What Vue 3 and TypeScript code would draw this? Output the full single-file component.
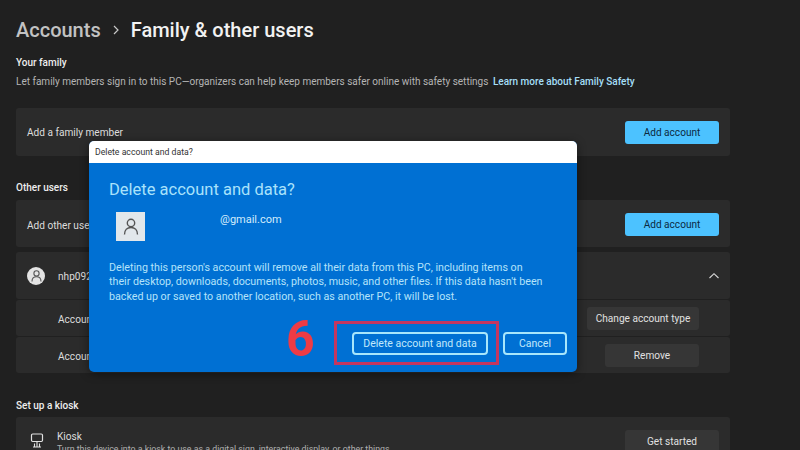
<script setup lang="ts">
const bodyText =
  "Deleting this person's account will remove all their data from this PC, including items on their desktop, downloads, documents, photos, music, and other files. If this data hasn't been backed up or saved to another location, such as another PC, it will be lost.";
</script>

<template>
  <div class="page">
    <header class="crumb">
      <span class="crumb-parent">Accounts</span>
      <svg class="crumb-sep" width="8" height="12" viewBox="0 0 8 12"><path d="M2 2l4 4-4 4" fill="none" stroke="#c8c8c8" stroke-width="1.2" /></svg>
      <span class="crumb-current">Family &amp; other users</span>
    </header>

    <h2 class="label first">Your family</h2>
    <p class="lead">
      Let family members sign in to this PC—organizers can help keep members safer online with safety settings
      <a class="link">Learn more about Family Safety</a>
    </p>

    <section class="card family">
      <span class="row-text low">Add a family member</span>
      <button class="btn primary">Add account</button>
    </section>

    <h2 class="label other">Other users</h2>
    <section class="card add-other">
      <span class="row-text">Add other user</span>
      <button class="btn primary">Add account</button>
    </section>

    <section class="group">
      <div class="card user-head">
        <span class="avatar">
          <svg width="11" height="12" viewBox="0 0 11 12"><circle cx="5.5" cy="3.4" r="2.6" fill="none" stroke="#555" stroke-width="1.1" /><path d="M1 11.5c0-3 2-4.7 4.5-4.7S10 8.500 10 11.500" fill="none" stroke="#555" stroke-width="1.1" /></svg>
        </span>
        <span class="row-text">nhp0923</span>
        <svg class="chevron" width="12" height="8" viewBox="0 0 12 8"><path d="M1.500 6L6 1.700 10.500 6" fill="none" stroke="#d8d8d8" stroke-width="1.100" /></svg>
      </div>
      <div class="card sub">
        <span class="row-text">Account</span>
        <button class="btn">Change account type</button>
      </div>
      <div class="card sub">
        <span class="row-text">Account</span>
        <button class="btn remove">Remove</button>
      </div>
    </section>

    <h2 class="label kiosk-label">Set up a kiosk</h2>
    <section class="card kiosk">
      <svg class="kiosk-icon" width="14" height="15" viewBox="0 0 14 15"><rect x="1.500" y="1" width="11" height="7.500" rx="1.200" fill="none" stroke="#e2e2e2" stroke-width="1.200" /><path d="M7 8.500V14M4.500 10.500v3.500M9.500 10.500v3.500M3 14h8" fill="none" stroke="#e2e2e2" stroke-width="1.100" /></svg>
      <div class="kiosk-text">
        <div class="row-text">Kiosk</div>
        <div class="kiosk-sub">Turn this device into a kiosk to use as a digital sign, interactive display, or other things</div>
      </div>
      <button class="btn">Get started</button>
    </section>

    <div class="dialog">
      <div class="titlebar">Delete account and data?</div>
      <div class="dialog-body">
        <h1 class="dialog-title">Delete account and data?</h1>
        <div class="identity">
          <span class="tile">
            <svg width="16" height="17" viewBox="0 0 16 17"><circle cx="8" cy="5" r="3.700" fill="none" stroke="#555" stroke-width="1.400" /><path d="M1.500 16.500c0-4.500 2.800-7 6.500-7s6.500 2.500 6.500 7" fill="none" stroke="#555" stroke-width="1.400" /></svg>
          </span>
          <span class="email">@gmail.com</span>
        </div>
        <p class="dialog-text">{{ bodyText }}</p>
        <div class="actions">
          <span class="step">6</span>
          <div class="highlight">
            <button class="outline">Delete account and data</button>
          </div>
          <button class="outline cancel">Cancel</button>
        </div>
      </div>
    </div>
  </div>
</template>

<style>
html, body { margin: 0; background: #1f1f1f; }
</style>

<style scoped>
.page {
  position: relative;
  width: 800px;
  height: 450px;
  overflow: hidden;
  box-sizing: border-box;
  padding: 0 70px 0 16px;
  background: #202020;
  font-family: Roboto, "Open Sans", sans-serif;
  color: #e4e4e4;
}
.crumb {
  display: flex;
  align-items: center;
  height: 30px;
  margin-top: 15px;
  font-size: 20px;
  font-weight: 500;
  line-height: 30px;
}
.crumb-parent { color: #c2c2c2; }
.crumb-sep { margin: 0 11px 0 11px; }
.crumb-current { color: #f2f2f2; }
.label {
  margin: 0;
  font-size: 10px;
  line-height: 14px;
  font-weight: 500;
  color: #eeeeee;
}
.label.first { margin-top: 11px; }
.label.other { margin-top: 25px; }
.label.kiosk-label { margin-top: 26px; }
.lead {
  margin: 5px 0 0;
  font-size: 10px;
  line-height: 14px;
  color: #b5b5b5;
  white-space: nowrap;
}
.link { margin-left: 2px; color: #a5dff7; font-weight: 500; }
.card {
  display: flex;
  align-items: center;
  justify-content: space-between;
  box-sizing: border-box;
  padding: 0 11px 0 11px;
  background: #2b2b2b;
  border-radius: 3px;
}
.family { height: 48px; margin-top: 19px; }
.add-other { height: 47px; margin-top: 5px; padding-top: 2px; }
.row-text { font-size: 10.100px; line-height: 14px; color: #dddddd; white-space: nowrap; }
.low { padding-top: 2px; }
.add-other .row-text { padding-top: 2px; }
.group { display: flex; flex-direction: column; gap: 1px; margin-top: 5px; }
.user-head { height: 47px; justify-content: flex-start; gap: 13px; }
.user-head .row-text { padding-top: 3px; }
.chevron { margin-left: auto; margin-right: -1px; }
.avatar {
  display: flex;
  align-items: center;
  justify-content: center;
  width: 18px;
  height: 18px;
  border-radius: 50%;
  background: #e3e3e3;
}
.sub { height: 36px; padding: 0 31px 0 42px; }
.sub .row-text { padding-top: 3px; }
.btn {
  box-sizing: border-box;
  width: 94px;
  height: 23px;
  padding: 0;
  border: 0;
  border-radius: 3px;
  background: #363636;
  color: #e0e0e0;
  font: 400 10.100px Roboto, "Open Sans", sans-serif;
}
.sub .btn { width: 112px; }
.sub .btn.remove { width: 94px; }
.btn.primary { background: #4cc2ff; color: #0b2a3f; }
.kiosk {
  height: 60px;
  margin-top: 4px;
  justify-content: flex-start;
  align-items: flex-start;
  padding-top: 13px;
}
.kiosk-icon { margin: 3px 13px 0 3px; flex: none; }
.kiosk-text { flex: 1; }
.kiosk-text .row-text { line-height: 13px; }
.kiosk-sub { font-size: 8.800px; line-height: 13px; color: #b0b0b0; white-space: nowrap; }
.kiosk .btn { flex: none; }
.dialog {
  position: absolute;
  left: 89px;
  top: 141px;
  width: 488px;
  height: 231px;
  border-radius: 5px;
  overflow: hidden;
  background: #0070d3;
  box-shadow: 0 2px 10px rgba(0, 0, 0, 0.45);
}
.titlebar {
  box-sizing: border-box;
  height: 22px;
  padding-left: 6px;
  background: #ffffff;
  color: #333333;
  font-size: 8.700px;
  line-height: 23px;
}
.dialog-body { box-sizing: border-box; padding: 16px 10px 0 20px; }
.dialog-title {
  margin: 0;
  font-size: 16.500px;
  font-weight: 400;
  line-height: 21px;
  color: #a9e2fb;
}
.identity { display: flex; align-items: flex-start; margin: 12px 0 0 7px; }
.tile {
  display: flex;
  align-items: center;
  justify-content: center;
  width: 29px;
  height: 29px;
  background: #e2e7eb;
}
.email { margin: 0 0 0 75px; font-size: 11px; line-height: 16px; color: #d3ecfb; }
.dialog-text {
  width: 437px;
  margin: 20px 0 0;
  font-size: 10.700px;
  line-height: 14.300px;
  color: #b4e3fa;
}
.actions { display: flex; align-items: center; margin-top: 13px; }
.step {
  width: 48px;
  margin: 0 0 9px 177px;
  color: #ee3b45;
  font: 700 50px/44px Roboto, "Open Sans", sans-serif;
}
.highlight {
  display: flex;
  box-sizing: border-box;
  width: 165px;
  height: 44px;
  align-items: center;
  padding-left: 15px;
  border: 3px solid #c4365f;
}
.outline {
  box-sizing: border-box;
  width: 136px;
  height: 23px;
  padding: 0;
  border: 2px solid #a8e6fb;
  border-radius: 4px;
  background: transparent;
  color: #c1e9fb;
  font: 400 10.500px Roboto, "Open Sans", sans-serif;
}
.cancel { width: 64px; margin-left: 4px; }
</style>
